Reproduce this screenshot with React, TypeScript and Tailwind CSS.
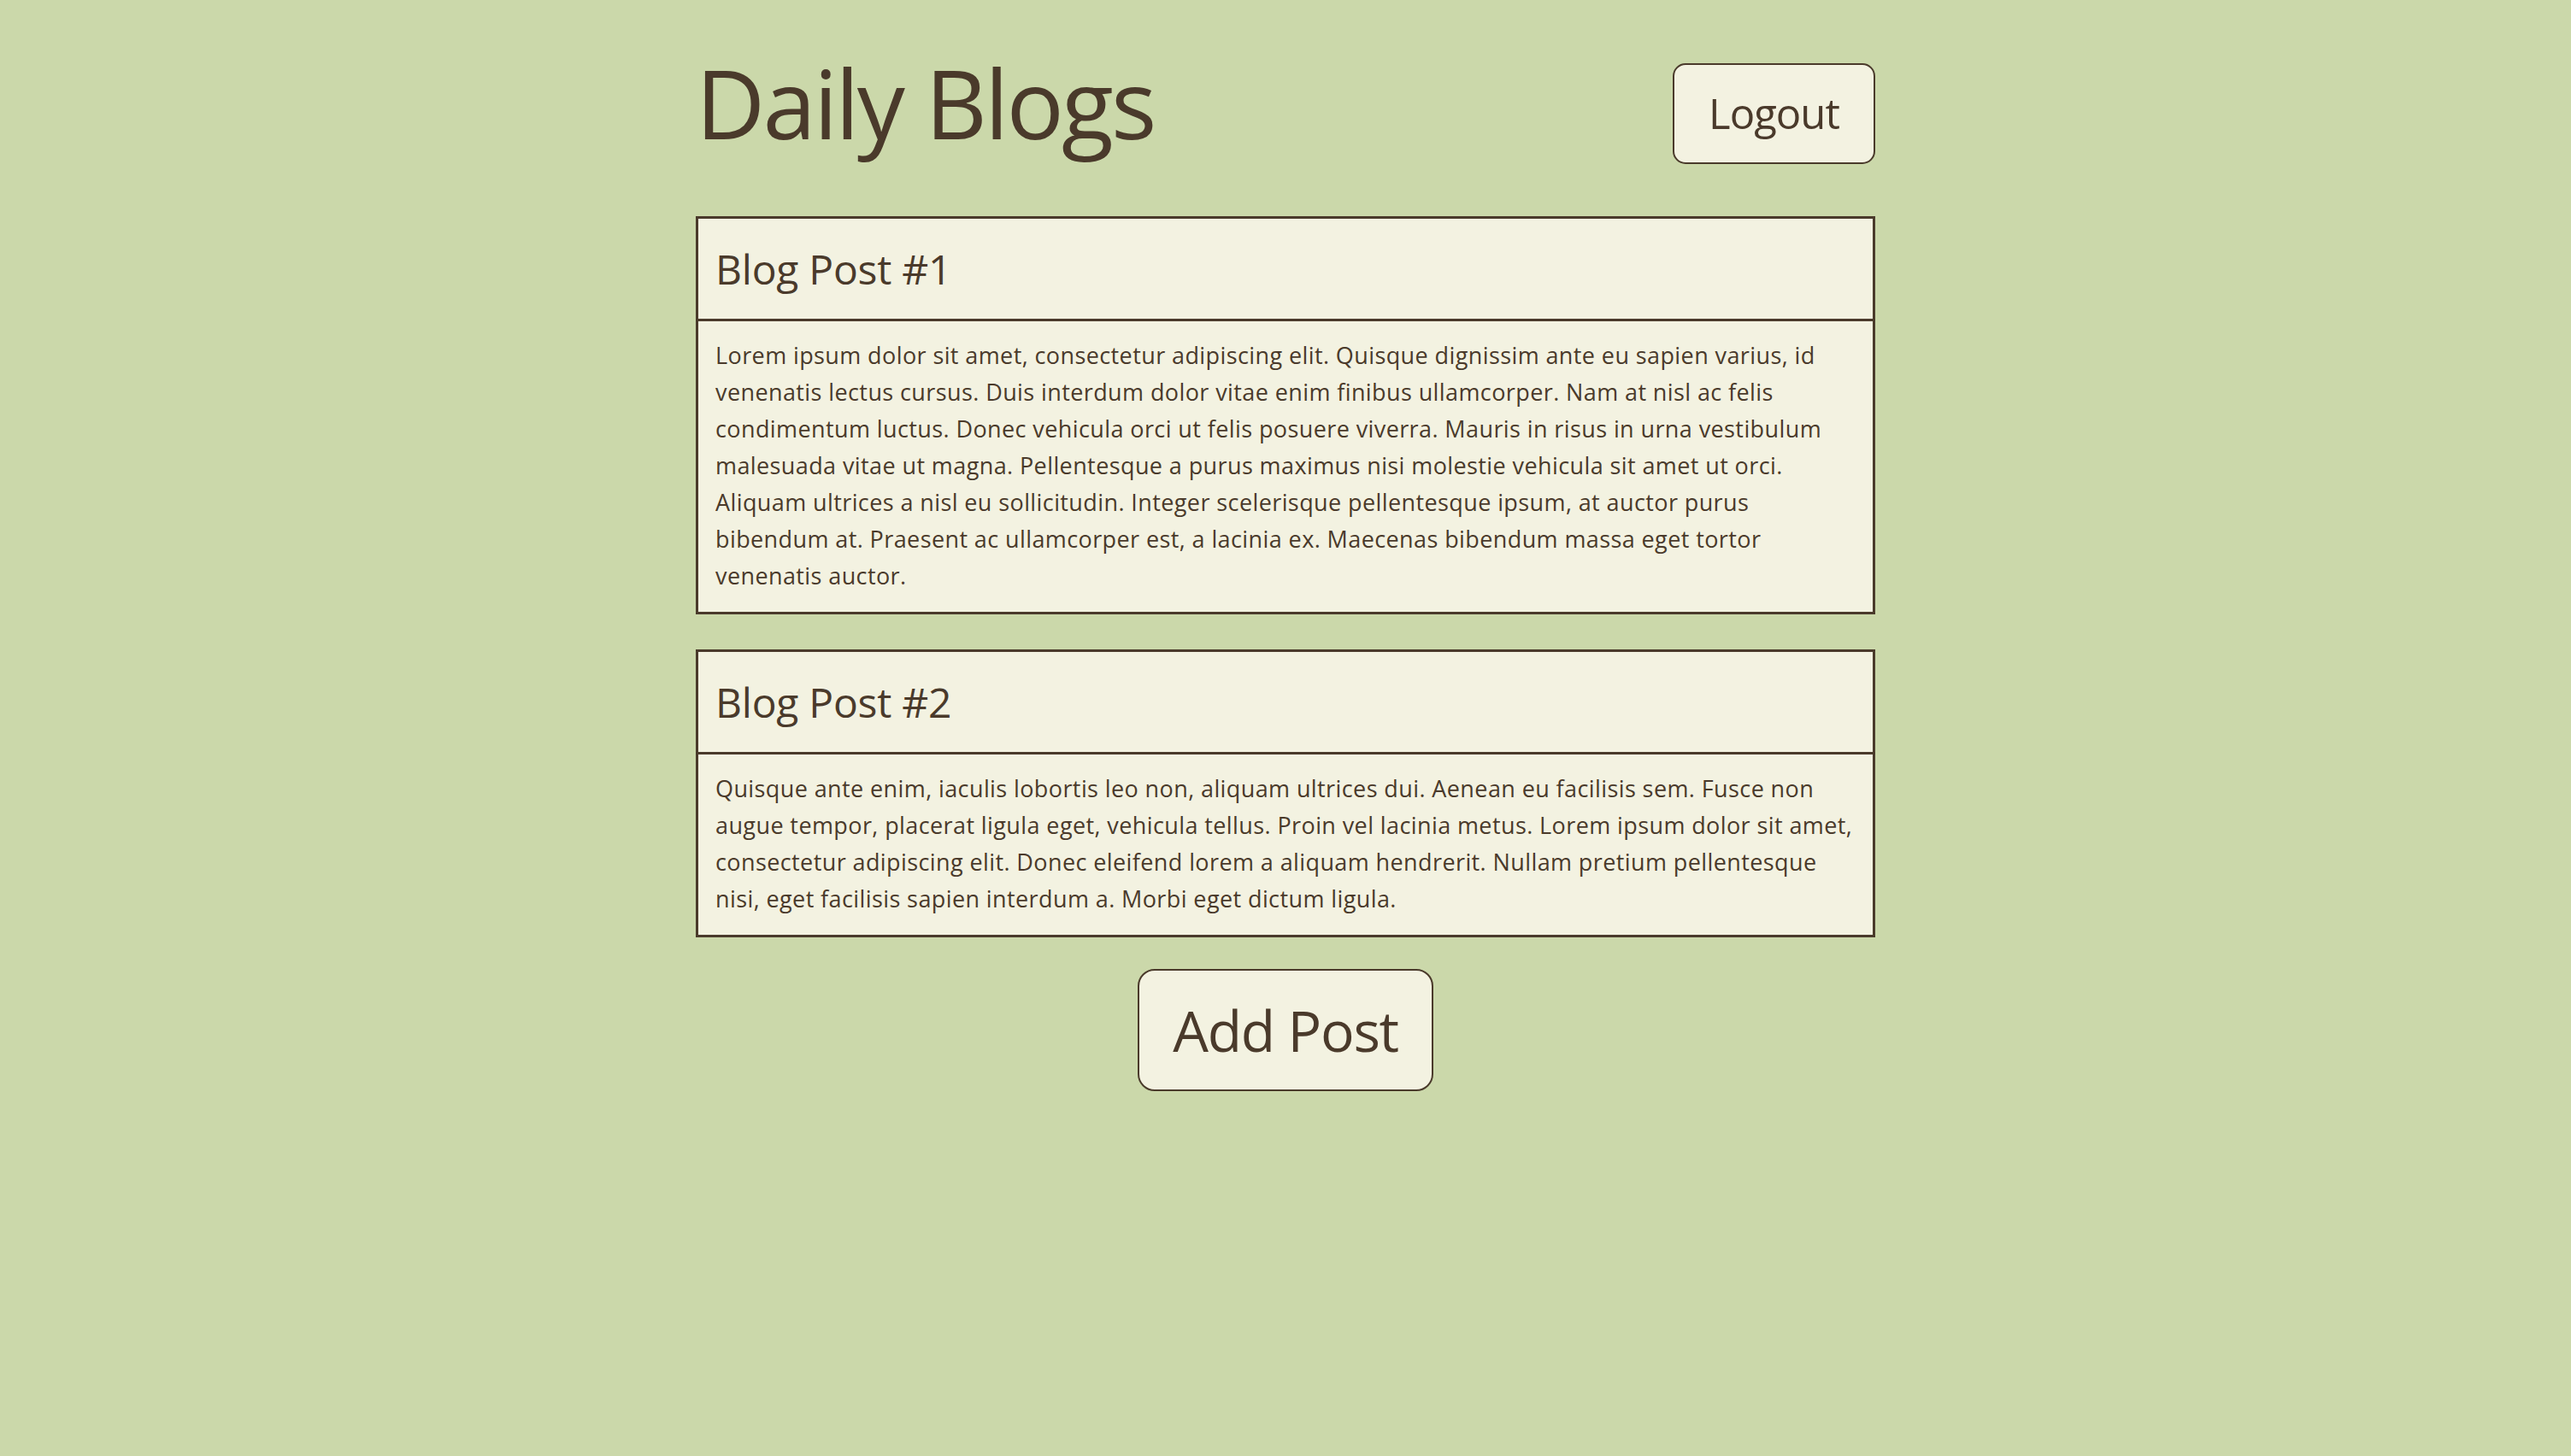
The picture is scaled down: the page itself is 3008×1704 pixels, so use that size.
import { useState } from "react";

type Post = {
  id: number;
  title: string;
  body: string;
};

const initialPosts: Post[] = [
  {
    id: 1,
    title: "Blog Post #1",
    body: "Lorem ipsum dolor sit amet, consectetur adipiscing elit. Quisque dignissim ante eu sapien varius, id venenatis lectus cursus. Duis interdum dolor vitae enim finibus ullamcorper. Nam at nisl ac felis condimentum luctus. Donec vehicula orci ut felis posuere viverra. Mauris in risus in urna vestibulum malesuada vitae ut magna. Pellentesque a purus maximus nisi molestie vehicula sit amet ut orci. Aliquam ultrices a nisl eu sollicitudin. Integer scelerisque pellentesque ipsum, at auctor purus bibendum at. Praesent ac ullamcorper est, a lacinia ex. Maecenas bibendum massa eget tortor venenatis auctor.",
  },
  {
    id: 2,
    title: "Blog Post #2",
    body: "Quisque ante enim, iaculis lobortis leo non, aliquam ultrices dui. Aenean eu facilisis sem. Fusce non augue tempor, placerat ligula eget, vehicula tellus. Proin vel lacinia metus. Lorem ipsum dolor sit amet, consectetur adipiscing elit. Donec eleifend lorem a aliquam hendrerit. Nullam pretium pellentesque nisi, eget facilisis sapien interdum a. Morbi eget dictum ligula.",
  },
];

const PostCard = ({ post }: { post: Post }) => {
  return (
    <article className="border-[3px] border-[#4a3a2b] bg-[#f3f2e1]">
      <div className="flex h-[120px] items-center border-b-[3px] border-[#4a3a2b] px-5">
        <h2 className="text-[48px] leading-none tracking-[-0.005em]">
          {post.title}
        </h2>
      </div>
      <p className="px-5 pt-[18px] pb-[21px] text-[27px] leading-[43px] tracking-[0.4px]">
        {post.body}
      </p>
    </article>
  );
};

export default function App() {
  const [posts, setPosts] = useState<Post[]>(initialPosts);

  const addPost = () => {
    const next = posts.length + 1;
    setPosts([
      ...posts,
      { id: next, title: `Blog Post #${next}`, body: "New post." },
    ]);
  };

  return (
    <div className="min-h-screen bg-[#cbd8aa] font-['Open_Sans','Noto_Sans',sans-serif] text-[#4a3a2b]">
      <div className="mx-auto w-[1380px] pt-[64px] pb-20">
        {/* Header */}
        <header className="flex items-start justify-between">
          <h1 className="text-[112px] leading-none tracking-[-0.025em]">
            Daily Blogs
          </h1>
          <button className="mt-[10px] h-[118px] w-[237px] rounded-[15px] border-2 border-[#4a3a2b] bg-[#f3f2e1] text-[49px] tracking-[-0.02em]">
            Logout
          </button>
        </header>

        {/* Posts */}
        <main className="mt-[61px] flex flex-col gap-[41px]">
          {posts.map((post) => (
            <PostCard key={post.id} post={post} />
          ))}
        </main>

        <div className="mt-[37px] flex justify-center">
          <button
            onClick={addPost}
            className="h-[143px] w-[346px] rounded-[20px] border-2 border-[#4a3a2b] bg-[#f3f2e1] text-[66px] tracking-[-0.02em]"
          >
            Add Post
          </button>
        </div>
      </div>
    </div>
  );
}
